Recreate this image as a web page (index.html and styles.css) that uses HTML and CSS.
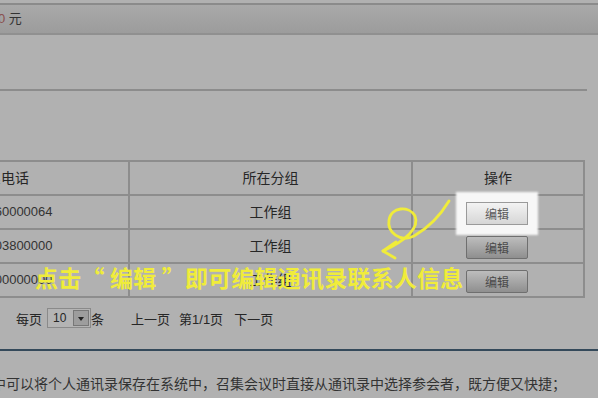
FILE: index.html
```html
<!DOCTYPE html>
<html lang="zh-CN">
<head>
    <meta charset="UTF-8">
    <meta name="viewport" content="width=device-width, initial-scale=1.0">
    <title>通讯录</title>
    <link rel="stylesheet" href="styles.css">
</head>
<body>
    <div class="page">
        <div class="balance"><span class="num">0</span> 元</div>
        <div class="blank"></div>
        <div class="rule"></div>

        <div class="grid">
            <table class="contacts">
                <tr>
                    <th class="c-phone">联系电话</th>
                    <th class="c-group">所在分组</th>
                    <th class="c-op">操作</th>
                </tr>
                <tr>
                    <td class="c-phone">13560000064</td>
                    <td class="c-group">工作组</td>
                    <td class="c-op"><button class="btn btn-hi">编辑</button></td>
                </tr>
                <tr>
                    <td class="c-phone">13903800000</td>
                    <td class="c-group">工作组</td>
                    <td class="c-op"><button class="btn">编辑</button></td>
                </tr>
                <tr>
                    <td class="c-phone">13600000000</td>
                    <td class="c-group">工作组</td>
                    <td class="c-op"><button class="btn">编辑</button></td>
                </tr>
            </table>

            <!-- annotation drawn over the table -->
            <svg class="scribble" width="598" height="140" viewBox="0 160 598 140">
                <path d="M449 201 C 440 216, 428 228, 414 236 C 400 243, 387 232, 389 220 C 391 207, 409 205, 415 216 C 420 228, 405 241, 383 251" />
                <path d="M396 242 L383 251 L395 258" />
            </svg>
            <div class="note">点击“ 编辑 ”即可编辑通讯录联系人信息</div>
        </div>

        <div class="pager">
            <span>每页</span>
            <span class="select"><span class="val">10</span><span class="drop"></span></span>
            <span class="tiao">条</span>
            <span class="link">上一页</span>
            <span class="link">第1/1页</span>
            <span class="link">下一页</span>
        </div>

        <div class="blue-rule"></div>
        <p class="desc">中可以将个人通讯录保存在系统中，召集会议时直接从通讯录中选择参会者，既方便又快捷；</p>
    </div>
</body>
</html>
```

FILE: styles.css
```css
html, body {
    margin: 0;
    padding: 0;
    width: 598px;
    height: 398px;
    overflow: hidden;
    background-color: #b1b1b1;
}
.page {
    padding-top: 3px;
    font-family: "Liberation Sans", "Noto Sans CJK SC", sans-serif;
    color: #262626;
}
.balance {
    height: 28px;
    line-height: 28px;
    border-top: 2px solid #8b8b8b;
    border-bottom: 2px solid #909090;
    background: linear-gradient(#a9a9a9, #9c9c9c);
    font-size: 13px;
    color: #333;
    margin-left: -2px;
}
.balance .num {
    color: #8a4f4f;
}
.blank {
    height: 54px;
}
.rule {
    width: 587px;
    height: 2px;
    background-color: #8c8c8c;
}
.grid {
    position: relative;
    margin-top: 69px;
    height: 138px;
}
.contacts {
    border-collapse: collapse;
    margin-left: -40px;
    font-size: 14px;
}
.contacts th, .contacts td {
    border: 2px solid #8d8d8d;
    padding: 0;
    height: 32px;
    line-height: 32px;
    font-weight: normal;
    color: #262626;
}
.contacts .c-phone {
    width: 155px;
    padding-left: 11px;
    text-align: left;
}
.contacts td.c-phone {
    font-size: 13px;
    color: #333;
}
.c-group {
    width: 281px;
    text-align: center;
}
.c-op {
    width: 170px;
    text-align: center;
}
.btn {
    position: relative;
    z-index: 1;
    width: 62px;
    height: 23px;
    margin-left: -2px;
    padding: 0;
    vertical-align: middle;
    border: 1px solid #6f6f6f;
    border-radius: 2px;
    background: linear-gradient(#bdbdbd, #8f8f8f);
    font-family: "Noto Sans CJK SC", sans-serif;
    font-size: 12px;
    color: #4a4a4a;
}
.btn-hi {
    border-color: #9a9a9a;
    border-radius: 0;
    background: linear-gradient(#f3f3f3, #d6d6d6);
    color: #5a5a5a;
    box-shadow: 0 0 2px 10px #f7f7f7;
}
.scribble {
    position: absolute;
    left: 0;
    top: 0;
    pointer-events: none;
    z-index: 2;
}
.scribble path {
    fill: none;
    stroke: #f0ec3a;
    stroke-width: 2.8;
    stroke-linecap: round;
    stroke-linejoin: round;
}
.note {
    position: absolute;
    left: 35px;
    top: 102px;
    z-index: 2;
    line-height: 30px;
    font-family: "Noto Sans CJK SC", sans-serif;
    font-size: 23px;
    font-weight: bold;
    letter-spacing: 0.2px;
    color: #f0ec3a;
    white-space: nowrap;
}
.pager {
    display: flex;
    align-items: center;
    height: 20px;
    margin-top: 10px;
    padding-left: 16px;
    font-size: 13px;
    color: #262626;
}
.select {
    display: flex;
    align-items: stretch;
    width: 42px;
    height: 18px;
    margin-left: 5px;
    border: 1px solid #8a8a8a;
    background-color: #b4b4b4;
}
.select .val {
    flex: 1;
    padding-left: 5px;
    line-height: 18px;
    font-size: 12px;
}
.select .drop {
    width: 14px;
    margin: 1px;
    border: 1px solid #777;
    background-color: #9d9d9d;
    position: relative;
}
.select .drop::after {
    content: "";
    position: absolute;
    left: 4px;
    top: 6px;
    border-left: 3px solid transparent;
    border-right: 3px solid transparent;
    border-top: 4px solid #222;
}
.tiao {
    margin-right: 27px;
}
.link {
    margin-right: 9px;
}
.link + .link + .link {
    margin-left: 2px;
}
.blue-rule {
    margin-top: 21px;
    height: 2px;
    background-color: #34495a;
}
.desc {
    margin: 23px 0 0 -8px;
    font-size: 14px;
    line-height: 20px;
    color: #333;
    white-space: nowrap;
}
```
